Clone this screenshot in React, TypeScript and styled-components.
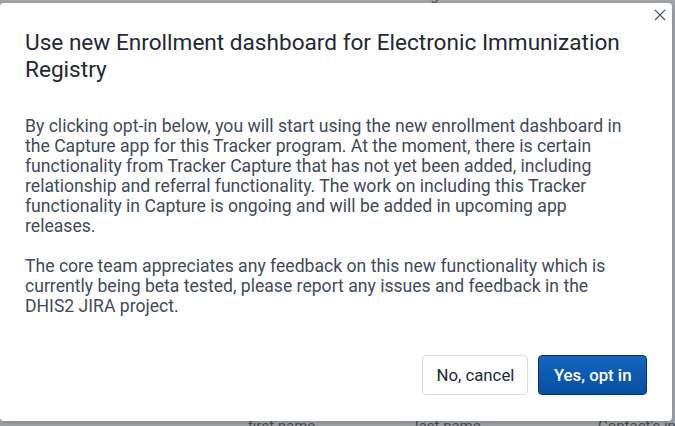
import React from "react";
import styled, { createGlobalStyle } from "styled-components";

const GlobalStyle = createGlobalStyle`
  html, body {
    margin: 0;
    padding: 0;
    width: 675px;
    height: 426px;
    overflow: hidden;
    font-family: Roboto, "Liberation Sans", sans-serif;
  }
`;

const Page = styled.div`
  position: relative;
  width: 675px;
  height: 426px;
  background: #a2a6ab;
  overflow: hidden;
`;

const BackgroundRow = styled.div<{ $top: number }>`
  position: absolute;
  left: 0;
  right: 0;
  top: ${(p) => p.$top}px;
  height: 20px;
  display: grid;
  grid-template-columns: 248px 167px 183px 1fr;
  font-size: 15px;
  color: #4a4f57;
  white-space: nowrap;
`;

const BackgroundCell = styled.div`
  overflow: hidden;
`;

const Modal = styled.div`
  position: absolute;
  left: 0;
  top: 3px;
  width: 672px;
  height: 418px;
  box-sizing: border-box;
  background: #ffffff;
  border-radius: 4px;
  box-shadow: 0 2px 6px rgba(33, 41, 52, 0.25);
  padding: 26px 24px 26px 25px;
  display: flex;
  flex-direction: column;
`;

const CloseButton = styled.button`
  position: absolute;
  top: 2px;
  right: 2px;
  width: 20px;
  height: 20px;
  padding: 0;
  border: none;
  background: transparent;
  display: flex;
  align-items: center;
  justify-content: center;
  cursor: pointer;
`;

const Title = styled.h1`
  margin: 0 0 33px;
  font-size: 22.6px;
  line-height: 27px;
  font-weight: 400;
  color: #212934;
  padding-right: 10px;
`;

const Body = styled.div`
  flex: 1;
  padding-right: 14px;
  font-size: 17.6px;
  line-height: 20px;
  color: #404b5a;
`;

const Paragraph = styled.p`
  margin: 0 0 20px;
`;

const Actions = styled.div`
  display: flex;
  justify-content: flex-end;
  gap: 10px;
  padding-right: 1px;
`;

const Button = styled.button<{ $primary?: boolean }>`
  height: 40px;
  padding: 0 ${(p) => (p.$primary ? "14.5px" : "13px")};
  border-radius: 4px;
  font-family: Roboto, "Liberation Sans", sans-serif;
  font-size: 16.8px;
  cursor: pointer;
  border: 1px solid ${(p) => (p.$primary ? "#093371" : "#d5dde5")};
  background: ${(p) =>
    p.$primary ? "linear-gradient(180deg, #1565c0 0%, #0650a3 100%)" : "#ffffff"};
  color: ${(p) => (p.$primary ? "#ffffff" : "#212934")};
  font-weight: ${(p) => (p.$primary ? 500 : 400)};
`;

const App: React.FC = () => {
  return (
    <Page>
      <GlobalStyle />
      <BackgroundRow $top={-14}>
        <BackgroundCell>Enrolment date</BackgroundCell>
        <BackgroundCell>Name</BackgroundCell>
        <BackgroundCell>Organisation</BackgroundCell>
        <BackgroundCell>Status</BackgroundCell>
      </BackgroundRow>
      <BackgroundRow $top={417}>
        <BackgroundCell />
        <BackgroundCell>first name</BackgroundCell>
        <BackgroundCell>last name</BackgroundCell>
        <BackgroundCell>Contact's info</BackgroundCell>
      </BackgroundRow>
      <Modal>
        <CloseButton aria-label="Close">
          <svg width="12" height="12" viewBox="0 0 12 12">
            <path d="M1 1L11 11M11 1L1 11" stroke="#4a5768" strokeWidth="1.2" />
          </svg>
        </CloseButton>
        <Title>Use new Enrollment dashboard for Electronic Immunization Registry</Title>
        <Body>
          <Paragraph>
            By clicking opt-in below, you will start using the new enrollment dashboard in
            the Capture app for this Tracker program. At the moment, there is certain
            functionality from Tracker Capture that has not yet been added, including
            relationship and referral functionality. The work on including this Tracker
            functionality in Capture is ongoing and will be added in upcoming app
            releases.
          </Paragraph>
          <Paragraph>
            The core team appreciates any feedback on this new functionality which is
            currently being beta tested, please report any issues and feedback in the
            DHIS2 JIRA project.
          </Paragraph>
        </Body>
        <Actions>
          <Button>No, cancel</Button>
          <Button $primary>Yes, opt in</Button>
        </Actions>
      </Modal>
    </Page>
  );
};

export default App;
